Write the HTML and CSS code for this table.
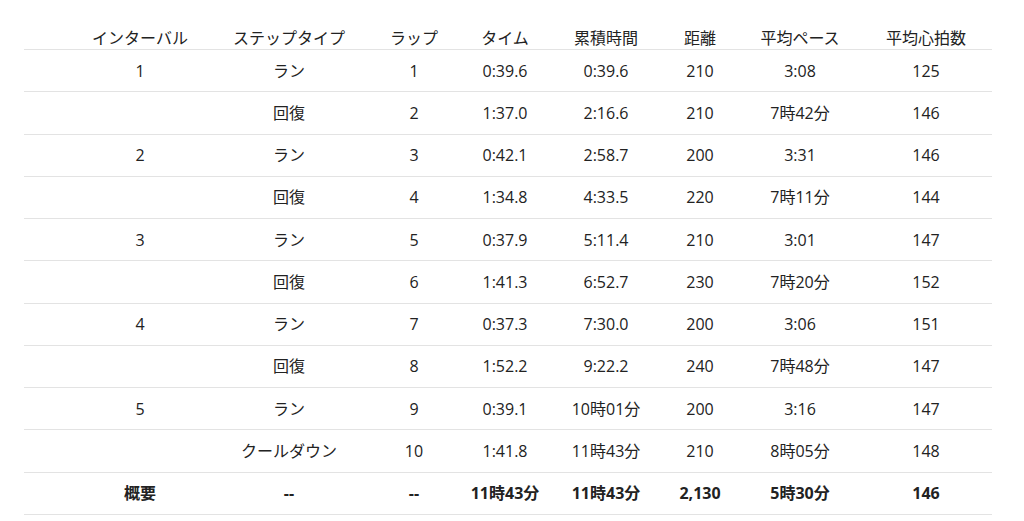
FILE: index.html
```html
<!DOCTYPE html>
<html lang="ja">
<head>
<meta charset="utf-8">
<title>ラップ</title>
<link rel="stylesheet" href="styles.css">
</head>
<body>
<div class="page">
  <div class="laps">
    <div class="row head">
      <div class="cell spacer"></div>
      <div class="cell">インターバル</div>
      <div class="cell">ステップタイプ</div>
      <div class="cell">ラップ</div>
      <div class="cell">タイム</div>
      <div class="cell">累積時間</div>
      <div class="cell">距離</div>
      <div class="cell">平均ペース</div>
      <div class="cell">平均心拍数</div>
    </div>
    <div class="row">
      <div class="cell spacer"></div>
      <div class="cell">1</div><div class="cell">ラン</div><div class="cell">1</div><div class="cell">0:39.6</div><div class="cell">0:39.6</div><div class="cell">210</div><div class="cell">3:08</div><div class="cell">125</div>
    </div>
    <div class="row">
      <div class="cell spacer"></div>
      <div class="cell"></div><div class="cell">回復</div><div class="cell">2</div><div class="cell">1:37.0</div><div class="cell">2:16.6</div><div class="cell">210</div><div class="cell">7時42分</div><div class="cell">146</div>
    </div>
    <div class="row">
      <div class="cell spacer"></div>
      <div class="cell">2</div><div class="cell">ラン</div><div class="cell">3</div><div class="cell">0:42.1</div><div class="cell">2:58.7</div><div class="cell">200</div><div class="cell">3:31</div><div class="cell">146</div>
    </div>
    <div class="row">
      <div class="cell spacer"></div>
      <div class="cell"></div><div class="cell">回復</div><div class="cell">4</div><div class="cell">1:34.8</div><div class="cell">4:33.5</div><div class="cell">220</div><div class="cell">7時11分</div><div class="cell">144</div>
    </div>
    <div class="row">
      <div class="cell spacer"></div>
      <div class="cell">3</div><div class="cell">ラン</div><div class="cell">5</div><div class="cell">0:37.9</div><div class="cell">5:11.4</div><div class="cell">210</div><div class="cell">3:01</div><div class="cell">147</div>
    </div>
    <div class="row">
      <div class="cell spacer"></div>
      <div class="cell"></div><div class="cell">回復</div><div class="cell">6</div><div class="cell">1:41.3</div><div class="cell">6:52.7</div><div class="cell">230</div><div class="cell">7時20分</div><div class="cell">152</div>
    </div>
    <div class="row">
      <div class="cell spacer"></div>
      <div class="cell">4</div><div class="cell">ラン</div><div class="cell">7</div><div class="cell">0:37.3</div><div class="cell">7:30.0</div><div class="cell">200</div><div class="cell">3:06</div><div class="cell">151</div>
    </div>
    <div class="row">
      <div class="cell spacer"></div>
      <div class="cell"></div><div class="cell">回復</div><div class="cell">8</div><div class="cell">1:52.2</div><div class="cell">9:22.2</div><div class="cell">240</div><div class="cell">7時48分</div><div class="cell">147</div>
    </div>
    <div class="row">
      <div class="cell spacer"></div>
      <div class="cell">5</div><div class="cell">ラン</div><div class="cell">9</div><div class="cell">0:39.1</div><div class="cell">10時01分</div><div class="cell">200</div><div class="cell">3:16</div><div class="cell">147</div>
    </div>
    <div class="row">
      <div class="cell spacer"></div>
      <div class="cell"></div><div class="cell">クールダウン</div><div class="cell">10</div><div class="cell">1:41.8</div><div class="cell">11時43分</div><div class="cell">210</div><div class="cell">8時05分</div><div class="cell">148</div>
    </div>
    <div class="row total">
      <div class="cell spacer"></div>
      <div class="cell">概要</div><div class="cell">--</div><div class="cell">--</div><div class="cell">11時43分</div><div class="cell">11時43分</div><div class="cell">2,130</div><div class="cell">5時30分</div><div class="cell">146</div>
    </div>
  </div>
</div>
</body>
</html>
```

FILE: styles.css
```css
* { box-sizing: border-box; }

html, body {
  margin: 0;
  padding: 0;
  background: #ffffff;
}

body {
  font-family: "Open Sans", "Noto Sans CJK JP", sans-serif;
  font-size: 16px;
  color: #222222;
}

.page {
  padding: 27px 32px 0 24px;
}

.laps {
  display: flex;
  flex-direction: column;
  width: 968px;
}

.row {
  display: grid;
  grid-template-columns: 48px 136px 162px 88px 94px 108px 80px 120px 132px;
  height: 42.27px;
  align-items: center;
  border-bottom: 1px solid #e3e3e3;
}

.row.head {
  height: 23px;
  align-items: end;
}

.cell {
  text-align: center;
  white-space: nowrap;
  line-height: 22px;
}

.row.head .cell {
  line-height: 22px;
}

.row.total .cell {
  font-weight: 700;
}
```
